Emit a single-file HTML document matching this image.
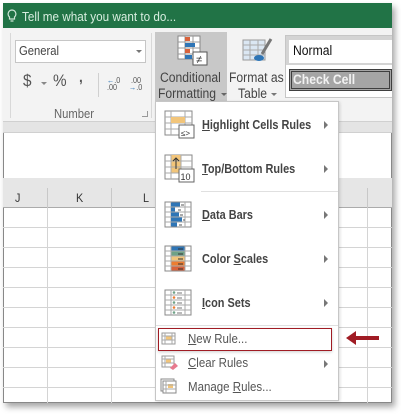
<!DOCTYPE html>
<html><head><style>
*{margin:0;padding:0;box-sizing:border-box}
body{width:401px;height:414px;background:#fff;position:relative;overflow:hidden;font-family:"Liberation Sans",sans-serif;}
.a{position:absolute}
.t{position:absolute;white-space:nowrap;color:#444;font-size:13px;transform:scaleX(0.9);transform-origin:left top}
.mi{position:absolute;white-space:nowrap;font-size:13px;font-weight:bold;color:#444;transform:scaleX(0.84);transform-origin:left top}
.ms{position:absolute;white-space:nowrap;font-size:12.5px;color:#555;transform:scaleX(0.92);transform-origin:left top}
.ar{position:absolute;width:0;height:0;border-top:4px solid transparent;border-bottom:4px solid transparent;border-left:4px solid #777}
.hl{position:absolute;height:1px;background:#d4d4d4}
.vl{position:absolute;width:1px;background:#d4d4d4}
</style></head><body>
<div class="a" style="left:3px;top:3px;width:389px;height:400px;background:#fff;box-shadow:3px 4px 6px rgba(0,0,0,0.35);border-left:1px solid #888;border-bottom:1px solid #888;border-right:1px solid #888;"></div>
<div class="a" style="left:3px;top:3px;width:389px;height:400px;overflow:hidden;">
 <div class="a" style="left:0;top:0;width:389px;height:25px;background:#217346;"></div>
 <svg class="a" style="left:4px;top:6px" width="10" height="14"><path d="M5 1a4 4 0 0 0-2.5 7v2h5V8A4 4 0 0 0 5 1z M3.5 12h3" fill="none" stroke="#cfe6d8" stroke-width="1.2"/></svg>
 <div class="t" style="left:19px;top:6px;color:#d8eee0;font-size:13px">Tell me what you want to do...</div>
 <div class="a" style="left:0;top:25px;width:389px;height:93px;background:#f3f3f3;"></div>
 <div class="a" style="left:0;top:118px;width:389px;height:12px;background:#e4e4e4;border-top:1px solid #d0d0d0;border-bottom:1px solid #d0d0d0"></div>
 <div class="vl" style="left:7px;top:30px;height:85px;background:#d8d8d8"></div>
 <div class="vl" style="left:148px;top:30px;height:85px;background:#d8d8d8"></div>
 <div class="a" style="left:12px;top:37px;width:131px;height:23px;background:#fff;border:1px solid #c6c6c6"></div>
 <div class="t" style="left:16px;top:41px;font-size:12.5px">General</div>
 <div class="a" style="left:133px;top:47px;border-left:3px solid transparent;border-right:3px solid transparent;border-top:3px solid #777"></div>
 <div class="t" style="left:20px;top:68px;font-size:17px;color:#555">$</div>
 <div class="a" style="left:38px;top:79px;border-left:3px solid transparent;border-right:3px solid transparent;border-top:3px solid #888"></div>
 <div class="t" style="left:50px;top:68px;font-size:17px;color:#555">%</div>
 <div class="t" style="left:76px;top:66px;font-size:15px;font-weight:bold;color:#555">,</div>
 <div class="vl" style="left:95px;top:70px;height:24px;background:#d0d0d0"></div>
 <div class="t" style="left:104px;top:74px;font-size:8px;color:#555;line-height:7px"><span style="color:#2e75b6">←</span>.0<br>.00</div>
 <div class="t" style="left:126px;top:74px;font-size:8px;color:#555;line-height:7px">&nbsp;.00<br><span style="color:#2e75b6">→</span>.0</div>
 <div class="t" style="left:51px;top:104px;font-size:12.5px;color:#666">Number</div>
 <div class="a" style="left:139px;top:108px;width:6px;height:6px;border:1px solid #999;border-width:0 1px 1px 0"></div>
 <div class="a" style="left:152px;top:29px;width:72px;height:69px;background:#c8c8c8"></div>
 <svg class="a" style="left:174px;top:32px" width="32" height="32">
  <rect x="1" y="1" width="22" height="23" fill="#fff" stroke="#888"/>
  <path d="M1 7h22M1 13h22M1 19h22M8 1v23M16 1v23" stroke="#999" fill="none"/>
  <rect x="8" y="2" width="5" height="4" fill="#d9623b"/><rect x="8" y="8" width="10" height="4" fill="#2e75b6"/>
  <rect x="8" y="14" width="5" height="4" fill="#d9623b"/><rect x="8" y="20" width="7" height="4" fill="#2e75b6"/>
  <rect x="16" y="17" width="14" height="13" fill="#fff" stroke="#555"/>
  <text x="19" y="28" font-size="11" fill="#333" font-family="Liberation Sans">≠</text>
 </svg>
 <div class="t" style="left:157px;top:67px;font-size:13.5px;color:#444">Conditional</div>
 <div class="t" style="left:155px;top:83px;font-size:13.5px;color:#444">Formatting</div>
 <div class="a" style="left:218px;top:90px;border-left:3px solid transparent;border-right:3px solid transparent;border-top:3px solid #666"></div>
 <svg class="a" style="left:239px;top:33px" width="32" height="32">
  <rect x="1" y="4" width="22" height="20" fill="#dbe7f3" stroke="#999"/>
  <path d="M1 9h22M1 14h22M1 19h22M8 4v20M16 4v20" stroke="#aaa" fill="none"/>
  <path d="M29 3l-9 15" stroke="#777" stroke-width="3"/>
  <ellipse cx="17" cy="22" rx="5" ry="3" fill="#2e75b6"/>
 </svg>
 <div class="t" style="left:226px;top:67px;font-size:13.5px">Format as</div>
 <div class="t" style="left:235px;top:83px;font-size:13.5px">Table</div>
 <div class="a" style="left:268px;top:90px;border-left:3px solid transparent;border-right:3px solid transparent;border-top:3px solid #777"></div>
 <div class="a" style="left:282px;top:32px;width:110px;height:63px;background:#fff;border:1px solid #c6c6c6"></div>
 <div class="a" style="left:283px;top:33px;width:108px;height:29px;background:#d4d4d4"></div>
 <div class="a" style="left:286px;top:37px;width:103px;height:23px;background:#fff"></div>
 <div class="t" style="left:290px;top:40px;font-size:13.5px;color:#111">Normal</div>
 <div class="a" style="left:286px;top:66px;width:103px;height:22px;background:#a5a5a5;border:3px double #3f3f3f"></div>
 <div class="t" style="left:290px;top:69px;font-size:13.5px;font-weight:bold;color:#f2f2f2">Check Cell</div>
 <div class="a" style="left:0;top:175px;width:389px;height:30px;background:#e6e6e6;border-bottom:1px solid #ababab"></div>
 <div class="vl" style="left:44px;top:185px;height:20px;background:#c8c8c8"></div>
 <div class="vl" style="left:108px;top:185px;height:20px;background:#c8c8c8"></div>
 <div class="vl" style="left:364px;top:185px;height:20px;background:#c8c8c8"></div>
 <div class="t" style="left:12px;top:188px;font-size:12px;color:#333">J</div>
 <div class="t" style="left:73px;top:188px;font-size:12px;color:#333">K</div>
 <div class="t" style="left:140px;top:188px;font-size:12px;color:#333">L</div>
 <div class="vl" style="left:44px;top:205px;height:200px"></div>
 <div class="vl" style="left:108px;top:205px;height:200px"></div>
 <div class="vl" style="left:364px;top:205px;height:200px"></div>
 <div class="hl" style="left:0;top:224px;width:389px"></div>
 <div class="hl" style="left:0;top:244px;width:389px"></div>
 <div class="hl" style="left:0;top:264px;width:389px"></div>
 <div class="hl" style="left:0;top:284px;width:389px"></div>
 <div class="hl" style="left:0;top:304px;width:389px"></div>
 <div class="hl" style="left:0;top:324px;width:389px"></div>
 <div class="hl" style="left:0;top:344px;width:389px"></div>
 <div class="hl" style="left:0;top:364px;width:389px"></div>
 <div class="hl" style="left:0;top:384px;width:389px"></div>
</div>
<div class="a" style="left:155px;top:101px;width:184px;height:300px;background:#fff;border:1px solid #c6c6c6;box-shadow:1px 1px 3px rgba(0,0,0,0.15)"></div>
<svg class="a" style="left:164px;top:110px" width="32" height="30">
 <rect x="1" y="1" width="27" height="24" fill="#fff" stroke="#888"/>
 <path d="M1 7h27M1 13h27M1 19h27M7 1v24M21 1v24" stroke="#aaa" fill="none"/>
 <rect x="7" y="7" width="14" height="6" fill="#f2c57a"/>
 <rect x="15" y="15" width="15" height="13" fill="#fff" stroke="#666"/>
 <text x="17" y="26" font-size="8" fill="#333" font-family="Liberation Sans">≤&gt;</text>
</svg>
<div class="mi" style="left:202px;top:117px"><u>H</u>ighlight Cells Rules</div>
<div class="ar" style="left:324px;top:121px"></div>
<svg class="a" style="left:164px;top:154px" width="32" height="30">
 <rect x="1" y="1" width="27" height="24" fill="#fff" stroke="#888"/>
 <rect x="7" y="1" width="10" height="18" fill="#f2c57a"/>
 <path d="M1 7h27M1 13h27M1 19h27M7 1v24M17 1v24" stroke="#aaa" fill="none"/>
 <path d="M12 15V4M9 7l3-3 3 3" stroke="#333" fill="none"/>
 <rect x="15" y="15" width="15" height="13" fill="#fff" stroke="#666"/>
 <text x="16.5" y="26" font-size="9" fill="#333" font-family="Liberation Sans">10</text>
</svg>
<div class="mi" style="left:202px;top:161px"><u>T</u>op/Bottom Rules</div>
<div class="ar" style="left:324px;top:165px"></div>
<div class="hl" style="left:201px;top:191px;width:137px;background:#e0e0e0"></div>
<svg class="a" style="left:164px;top:201px" width="30" height="28">
 <rect x="1" y="1" width="26" height="25" fill="#fff" stroke="#888"/>
 <path d="M1 6h26M1 11h26M1 16h26M1 21h26M7 1v25M21 1v25" stroke="#aaa" fill="none"/>
 <rect x="7" y="1.5" width="9" height="4" fill="#2e75b6"/><rect x="7" y="6.5" width="4" height="4" fill="#2e75b6"/>
 <rect x="7" y="11.5" width="8" height="4" fill="#2e75b6"/><rect x="7" y="16.5" width="11" height="4" fill="#2e75b6"/>
 <rect x="7" y="21.5" width="6" height="4" fill="#2e75b6"/>
 <path d="M17 4h3M14 9h3M16 14h3M19 19h2M15 24h3" stroke="#555"/>
</svg>
<div class="mi" style="left:202px;top:207px"><u>D</u>ata Bars</div>
<div class="ar" style="left:324px;top:211px"></div>
<svg class="a" style="left:164px;top:245px" width="30" height="28">
 <rect x="1" y="1" width="26" height="25" fill="#fff" stroke="#888"/>
 <rect x="7" y="1.5" width="14" height="4" fill="#2e75b6"/><rect x="7" y="6.5" width="14" height="4" fill="#6fa287"/>
 <rect x="7" y="11.5" width="14" height="4" fill="#f2c57a"/><rect x="7" y="16.5" width="14" height="4" fill="#ed7d31"/>
 <rect x="7" y="21.5" width="14" height="4" fill="#d9623b"/>
 <path d="M1 6h26M1 11h26M1 16h26M1 21h26M7 1v25M21 1v25" stroke="#aaa" fill="none"/>
 <path d="M14 4h5M14 9h5M14 14h5M14 19h5M14 24h5" stroke="#333"/>
</svg>
<div class="mi" style="left:202px;top:251px">Color <u>S</u>cales</div>
<div class="ar" style="left:324px;top:255px"></div>
<svg class="a" style="left:164px;top:289px" width="30" height="28">
 <rect x="1" y="1" width="26" height="25" fill="#fff" stroke="#888"/>
 <path d="M1 6h26M1 11h26M1 16h26M1 21h26M7 1v25M21 1v25" stroke="#aaa" fill="none"/>
 <circle cx="10" cy="3.5" r="1.3" fill="#6fa287"/><circle cx="10" cy="8.5" r="1.3" fill="#ed7d31"/>
 <circle cx="10" cy="13.5" r="1.3" fill="#6fa287"/><circle cx="10" cy="18.5" r="1.3" fill="#ed7d31"/>
 <circle cx="10" cy="23.5" r="1.3" fill="#6fa287"/>
 <path d="M13 4h5M13 9h5M13 14h5M13 19h5M13 24h5" stroke="#777"/>
</svg>
<div class="mi" style="left:202px;top:295px"><u>I</u>con Sets</div>
<div class="ar" style="left:324px;top:299px"></div>
<div class="hl" style="left:156px;top:325px;width:182px;background:#e0e0e0"></div>
<div class="a" style="left:158px;top:328px;width:174px;height:23px;border:1px solid #a01c24;box-shadow:0 1px 3px rgba(0,0,0,0.2)"></div>
<svg class="a" style="left:161px;top:332px" width="16" height="14"><rect x="1" y="1" width="13" height="11" fill="#fff" stroke="#999"/><rect x="5" y="4" width="6" height="4" fill="#f2c57a"/><path d="M1 4h13M1 8h13M4 1v11M11 1v11" stroke="#aaa" fill="none"/></svg>
<div class="ms" style="left:188px;top:332px"><u>N</u>ew Rule...</div>
<svg class="a" style="left:344px;top:330px" width="40" height="16"><path d="M2 8l10-7v5h23v4H12v5z" fill="#a01c24"/></svg>
<svg class="a" style="left:161px;top:355px" width="18" height="16"><rect x="1" y="1" width="12" height="11" fill="#fff" stroke="#999"/><rect x="5" y="4" width="5" height="4" fill="#f2c57a"/><path d="M1 4h12M1 8h12M4 1v11" stroke="#aaa" fill="none"/><path d="M9 13l5-5 3 3-5 4z" fill="#e87a8e"/></svg>
<div class="ms" style="left:188px;top:356px"><u>C</u>lear Rules</div>
<div class="ar" style="left:324px;top:360px"></div>
<svg class="a" style="left:160px;top:378px" width="18" height="16"><rect x="1" y="1" width="13" height="12" fill="#fff" stroke="#888"/><rect x="3" y="3" width="13" height="12" fill="#fff" stroke="#888"/><rect x="8" y="6" width="5" height="4" fill="#f2c57a"/><path d="M3 7h13M3 11h13M6 3v12" stroke="#aaa" fill="none"/></svg>
<div class="ms" style="left:188px;top:380px">Manage <u>R</u>ules...</div>
</body></html>
